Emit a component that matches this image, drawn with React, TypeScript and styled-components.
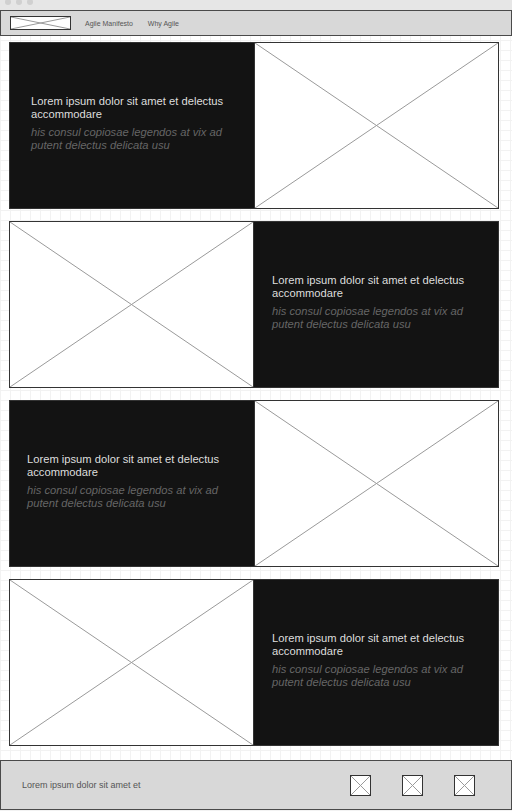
import React from "react";
import styled, { createGlobalStyle } from "styled-components";

const GlobalStyle = createGlobalStyle`
  html, body {
    margin: 0;
    padding: 0;
    background: #ffffff;
  }
  body {
    font-family: "Liberation Sans", Arial, sans-serif;
  }
`;

const Page = styled.div`
  display: flex;
  flex-direction: column;
  width: 512px;
  height: 811px;
  overflow: hidden;
  background-color: #ffffff;
  background-image: linear-gradient(to right, #f2f2f2 1px, transparent 1px),
    linear-gradient(to bottom, #f2f2f2 1px, transparent 1px);
  background-size: 10px 10px;
`;

const WindowBar = styled.div`
  display: flex;
  align-items: flex-start;
  gap: 5px;
  height: 10px;
  padding-left: 5px;
  background: #e6e6e6;
  overflow: hidden;
`;

const Dot = styled.span`
  width: 6px;
  height: 6px;
  margin-top: -1px;
  border-radius: 50%;
  background: #d0d0d0;
`;

const Header = styled.header`
  display: flex;
  align-items: center;
  height: 26px;
  box-sizing: border-box;
  padding-left: 9px;
  background: #d8d8d8;
  border: 1px solid #4a4a4a;
`;

const Logo = styled.div`
  width: 61px;
  height: 14px;
  box-sizing: border-box;
  border: 1px solid #333;
  background: #fff;
  margin-right: 14px;
`;

const NavLink = styled.a`
  font-size: 7px;
  color: #555;
  text-decoration: none;
  margin-right: 15px;
`;

const Main = styled.main`
  display: flex;
  flex-direction: column;
  gap: 12px;
  padding: 6px 13px 0 9px;
`;

const Card = styled.section<{ $reverse?: boolean }>`
  display: flex;
  flex-direction: ${({ $reverse }) => ($reverse ? "row-reverse" : "row")};
  height: 167px;
  box-sizing: border-box;
  border: 1px solid #333;
  background: #fff;
`;

const TextPanel = styled.div<{ $pad: number }>`
  flex: 0 0 244px;
  display: flex;
  flex-direction: column;
  justify-content: center;
  box-sizing: border-box;
  padding: 0 12px 4px ${({ $pad }) => $pad}px;
  background: #131313;
`;

const Title = styled.h2`
  margin: 0 0 5px;
  font-size: 11.2px;
  line-height: 13px;
  font-weight: normal;
  color: #dedede;
`;

const Subtitle = styled.p`
  margin: 0;
  font-size: 11.2px;
  line-height: 13px;
  font-style: italic;
  color: #666;
`;

const ImagePanel = styled.div<{ $divider: "left" | "right" }>`
  flex: 1;
  ${({ $divider }) => `border-${$divider}: 1px solid #333;`}
`;

const Footer = styled.footer`
  display: flex;
  align-items: center;
  height: 50px;
  box-sizing: border-box;
  margin-top: 14px;
  padding: 0 36px 0 21px;
  background: #d8d8d8;
  border: 1px solid #4a4a4a;
`;

const FooterText = styled.span`
  flex: 1;
  font-size: 9px;
  color: #555;
`;

const IconRow = styled.div`
  display: flex;
  gap: 31px;
`;

const IconBox = styled.div`
  width: 21px;
  height: 21px;
  box-sizing: border-box;
  border: 1px solid #333;
  background: #fff;
`;

const Cross: React.FC = () => (
  <svg width="100%" height="100%" viewBox="0 0 100 100" preserveAspectRatio="none" style={{ display: "block" }}>
    <line x1="0" y1="0" x2="100" y2="100" stroke="#9a9a9a" strokeWidth="1" vectorEffect="non-scaling-stroke" />
    <line x1="100" y1="0" x2="0" y2="100" stroke="#9a9a9a" strokeWidth="1" vectorEffect="non-scaling-stroke" />
  </svg>
);

const features = [
  { reverse: false, pad: 21 },
  { reverse: true, pad: 18 },
  { reverse: false, pad: 17 },
  { reverse: true, pad: 18 },
];

const App: React.FC = () => {
  return (
    <Page>
      <GlobalStyle />
      <WindowBar>
        <Dot />
        <Dot />
        <Dot />
      </WindowBar>
      <Header>
        <Logo>
          <Cross />
        </Logo>
        <NavLink>Agile Manifesto</NavLink>
        <NavLink>Why Agile</NavLink>
      </Header>
      <Main>
        {features.map((f, i) => (
          <Card key={i} $reverse={f.reverse}>
            <TextPanel $pad={f.pad}>
              <Title>Lorem ipsum dolor sit amet et delectus accommodare</Title>
              <Subtitle>his consul copiosae legendos at vix ad putent delectus delicata usu</Subtitle>
            </TextPanel>
            <ImagePanel $divider={f.reverse ? "right" : "left"}>
              <Cross />
            </ImagePanel>
          </Card>
        ))}
      </Main>
      <Footer>
        <FooterText>Lorem ipsum dolor sit amet et</FooterText>
        <IconRow>
          <IconBox>
            <Cross />
          </IconBox>
          <IconBox>
            <Cross />
          </IconBox>
          <IconBox>
            <Cross />
          </IconBox>
        </IconRow>
      </Footer>
    </Page>
  );
};

export default App;
